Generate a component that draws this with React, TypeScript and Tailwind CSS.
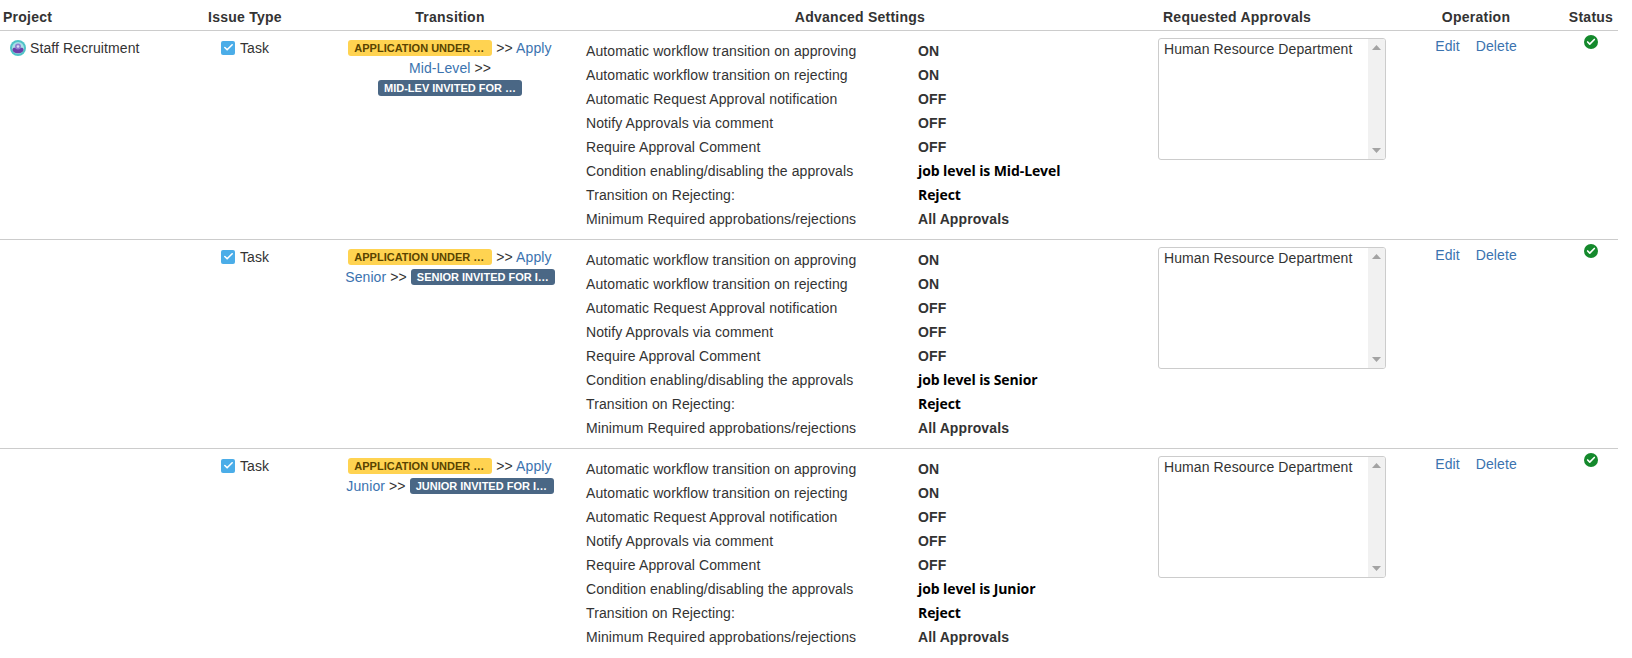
import { Check } from 'lucide-react';

const font = 'font-["Liberation_Sans",Arial,sans-serif]';

const rows = [
  { project: true, apply: 'Mid-Level', target: 'MID-LEV INVITED FOR INTERVIEW', level: 'Mid-Level' },
  { project: false, apply: 'Senior', target: 'SENIOR INVITED FOR INTERVIEW', level: 'Senior' },
  { project: false, apply: 'Junior', target: 'JUNIOR INVITED FOR INTERVIEW', level: 'Junior' },
];

function ProjectAvatar() {
  return (
    <svg width="16" height="16" viewBox="0 0 16 16" className="shrink-0">
      <circle cx="8" cy="8" r="8" fill="#4fc3c7" />
      <circle cx="8" cy="8" r="6" fill="#a9dfe6" />
      <path d="M2.5 9.5c0-1.2 1-1.8 2-1.8h7c1 0 2 .6 2 1.8 0 2.4-2.4 3.8-5.5 3.8S2.5 11.900 2.500 9.500z" fill="#6a3fa8" />
      <circle cx="8" cy="6.500" r="3" fill="#8f7fd0" />
      <circle cx="8" cy="6.500" r="1.300" fill="#dcd8f5" />
    </svg>
  );
}

function Lozenge({ text, yellow }: { text: string; yellow?: boolean }) {
  return (
    <span
      className={`inline-block w-[144px] h-4 mt-[2px] pl-[6px] pr-[5px] rounded-[3px] align-top text-[11px] leading-4 font-bold tracking-normal truncate ${
        yellow ? 'bg-[#ffd351] text-[#594300]' : 'bg-[#4a6785] text-white'
      }`}
    >
      {text}
    </span>
  );
}

function Setting({ label, children, custom }: { label: string; children: string; custom?: boolean }) {
  return (
    <div className="flex h-6 items-center">
      <span className="w-[332px] shrink-0 text-[#333]">{label}</span>
      <span className={custom ? 'font-["Open_Sans",sans-serif] font-bold tracking-[-0.1px] text-black' : 'font-bold text-[#333]'}>{children}</span>
    </div>
  );
}

function ApprovalsBox() {
  return (
    <div className="flex w-[228px] h-[122px] border border-[#ccc] rounded-[3px] overflow-hidden bg-white">
      <div className="flex-1 px-[5px] leading-5 text-[#333]">Human Resource Department</div>
      <div className="flex w-[17px] flex-col items-center justify-between bg-[#f1f1f1] py-[6px]">
        <svg width="9" height="5" viewBox="0 0 9 5"><path d="M4.500 0 9 5H0z" fill="#a3a3a3" /></svg>
        <svg width="9" height="5" viewBox="0 0 9 5"><path d="M0 0h9L4.500 5z" fill="#a3a3a3" /></svg>
      </div>
    </div>
  );
}

export default function App() {
  return (
    <div className={`${font} w-[1632px] h-[658px] overflow-hidden bg-white text-sm tracking-[0.1px] text-[#333]`}>
      <table className="w-[1618px] table-fixed border-collapse">
        <colgroup>
          <col className="w-[166px]" />
          <col className="w-[158px]" />
          <col className="w-[252px]" />
          <col className="w-[582px]" />
          <col className="w-[230px]" />
          <col className="w-[176px]" />
          <col className="w-[54px]" />
        </colgroup>
        <thead>
          <tr className="h-[30px] border-b border-[#ccc] text-sm font-bold tracking-[0.25px] [&>th]:pt-[4px]">
            <th className="pl-[3px] text-left">Project</th>
            <th className="text-center">Issue Type</th>
            <th className="text-center">Transition</th>
            <th className="pr-[14px] text-center">Advanced Settings</th>
            <th className="pl-[5px] text-left">Requested Approvals</th>
            <th className="text-center">Operation</th>
            <th className="text-center">Status</th>
          </tr>
        </thead>
        <tbody>
          {rows.map((row, i) => (
            <tr key={row.level} className={`h-[209px] align-top ${i < 2 ? 'border-b border-[#ccc]' : ''}`}>
              <td className="pt-[7px] pl-[10px]">
                {row.project && (
                  <div className="flex items-center gap-1 leading-5">
                    <ProjectAvatar />
                    <span>Staff Recruitment</span>
                  </div>
                )}
              </td>
              <td className="pt-[7px] pl-[55px]">
                <div className="flex items-center gap-[5px] leading-5">
                  <span className="flex size-[14px] items-center justify-center rounded-[2px] bg-[#4bade8]">
                    <Check size={11} strokeWidth={3.5} className="text-white" />
                  </span>
                  <span>Task</span>
                </div>
              </td>
              <td className="pt-[7px] px-5 text-center leading-5">
                <Lozenge text="APPLICATION UNDER REVIEW" yellow /> &gt;&gt;{' '}
                <a className="text-[#3b73af]">Apply {row.apply}</a> &gt;&gt; <Lozenge text={row.target} />
              </td>
              <td className="pt-2 pl-[10px]">
                <Setting label="Automatic workflow transition on approving">ON</Setting>
                <Setting label="Automatic workflow transition on rejecting">ON</Setting>
                <Setting label="Automatic Request Approval notification">OFF</Setting>
                <Setting label="Notify Approvals via comment">OFF</Setting>
                <Setting label="Require Approval Comment">OFF</Setting>
                <Setting label="Condition enabling/disabling the approvals" custom>{`job level is ${row.level}`}</Setting>
                <Setting label="Transition on Rejecting:" custom>Reject</Setting>
                <Setting label="Minimum Required approbations/rejections">All Approvals</Setting>
              </td>
              <td className="pt-[7px]">
                <ApprovalsBox />
              </td>
              <td className="pt-[5px] leading-5">
                <div className="flex justify-center gap-4 text-[#3b73af]">
                  <a>Edit</a>
                  <a>Delete</a>
                </div>
              </td>
              <td className="pt-1">
                <span className="mx-auto flex size-[14px] items-center justify-center rounded-full bg-[#14892c]">
                  <Check size={10} strokeWidth={4} className="text-white" />
                </span>
              </td>
            </tr>
          ))}
        </tbody>
      </table>
    </div>
  );
}
